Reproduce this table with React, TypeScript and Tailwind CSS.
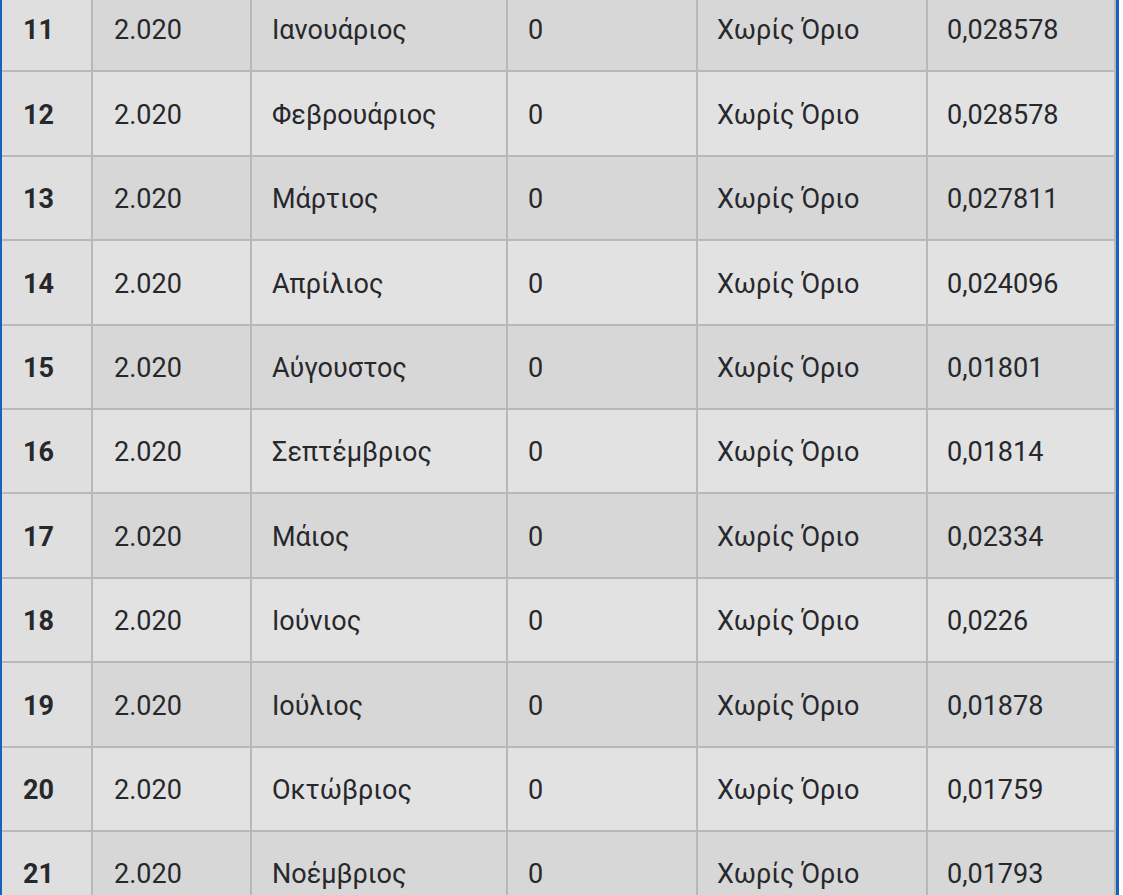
import React from "react";

const rows: [string, string, string][] = [
  ["11", "Ιανουάριος", "0,028578"],
  ["12", "Φεβρουάριος", "0,028578"],
  ["13", "Μάρτιος", "0,027811"],
  ["14", "Απρίλιος", "0,024096"],
  ["15", "Αύγουστος", "0,01801"],
  ["16", "Σεπτέμβριος", "0,01814"],
  ["17", "Μάιος", "0,02334"],
  ["18", "Ιούνιος", "0,0226"],
  ["19", "Ιούλιος", "0,01878"],
  ["20", "Οκτώβριος", "0,01759"],
  ["21", "Νοέμβριος", "0,01793"],
];

export default function App() {
  return (
    <div className="w-[1123px] h-[895px] overflow-hidden bg-white">
      <div
        className="w-[1119px] h-full border-l-2 border-r-[3px] border-[#1762c0] overflow-hidden text-[27px] text-[#26282c]"
        style={{ fontFamily: "Roboto, 'Noto Sans', sans-serif" }}
      >
        <div className="-mt-[12px] flex flex-col">
          {rows.map(([n, month, val], i) => {
            const bg = i % 2 === 0 ? "bg-[#d7d7d7]" : "bg-[#e3e2e3]";
            return (
              <div key={n} className="flex h-[84.4px] border-b-2 border-[#b8b8b8] shrink-0">
                <div className="w-[91px] shrink-0 bg-[#dfdfdf] border-r-2 border-[#b8b8b8] flex items-center pt-[3px] pl-[21px] font-bold">
                  {n}
                </div>
                <div className={`w-[159px] shrink-0 ${bg} border-r-2 border-[#b8b8b8] flex items-center pt-[3px] pl-[21px]`}>
                  2.020
                </div>
                <div className={`w-[256px] shrink-0 ${bg} border-r-2 border-[#b8b8b8] flex items-center pt-[3px] pl-[20px]`}>
                  {month}
                </div>
                <div className={`w-[190px] shrink-0 ${bg} border-r-2 border-[#b8b8b8] flex items-center pt-[3px] pl-[20px]`}>
                  0
                </div>
                <div className={`w-[230px] shrink-0 ${bg} border-r-2 border-[#b8b8b8] flex items-center pt-[3px] pl-[19px]`}>
                  Χωρίς Όριο
                </div>
                <div className={`flex-1 ${bg} border-r-2 border-[#b8b8b8] flex items-center pt-[3px] pl-[19px]`}>
                  {val}
                </div>
              </div>
            );
          })}
        </div>
      </div>
    </div>
  );
}
